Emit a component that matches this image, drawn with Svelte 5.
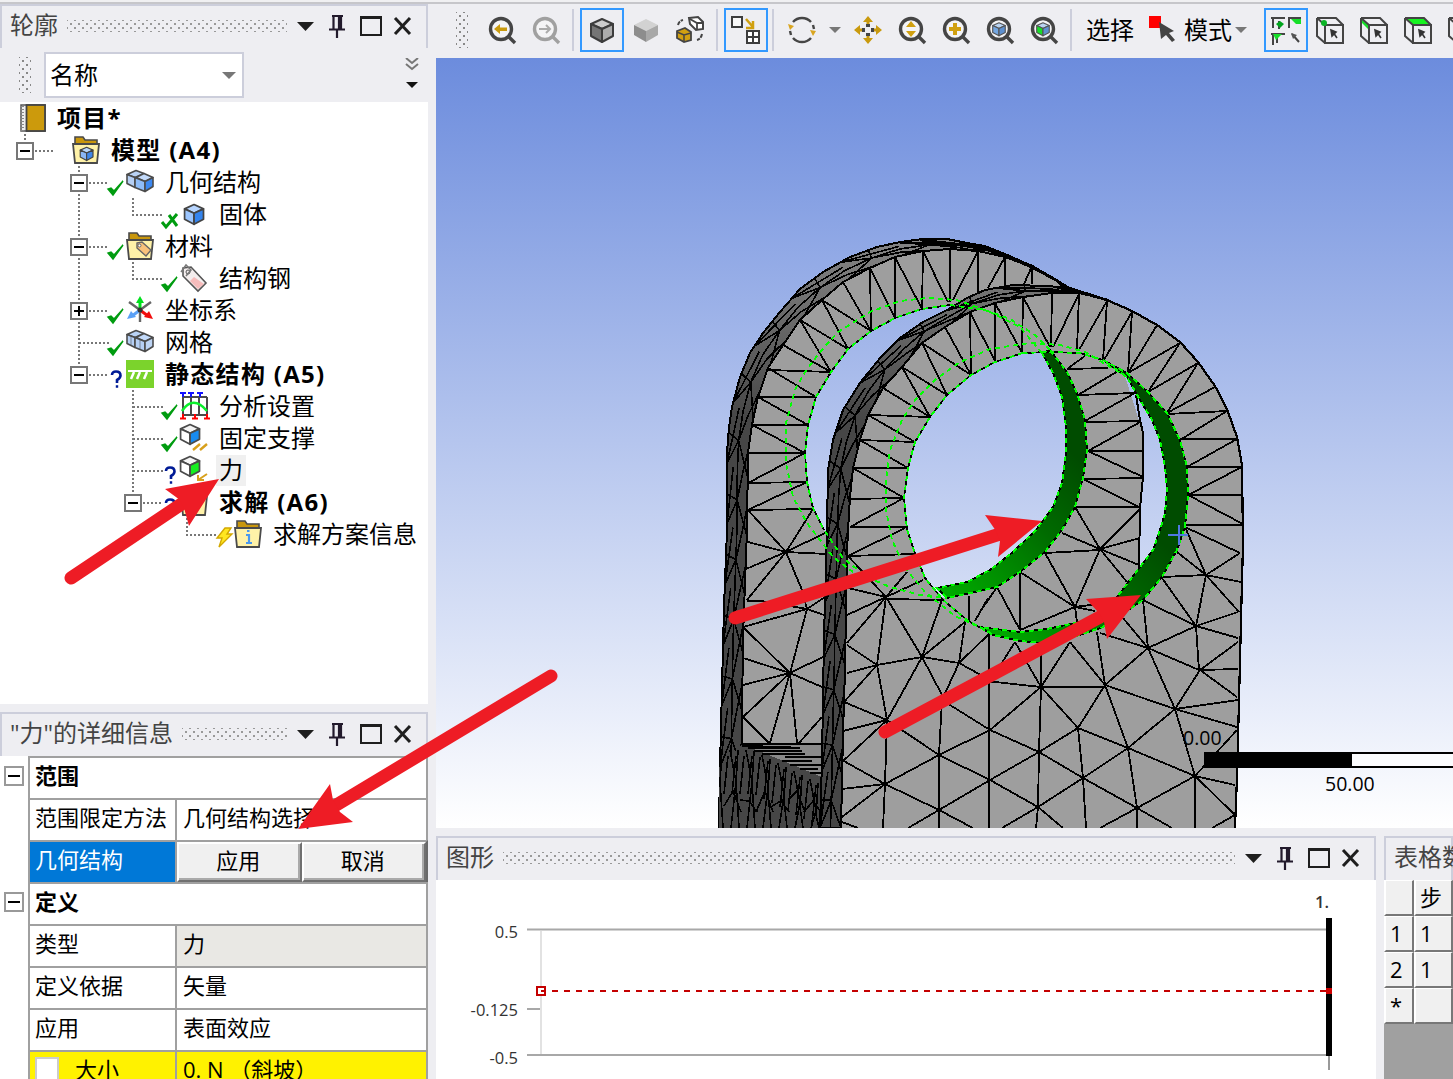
<script>
  const tree = [
    { level: 0, label: '项目*', icon: 'book', bold: true },
    { level: 1, label: '模型 (A4)', icon: 'model', bold: true },
    { level: 2, label: '几何结构', icon: 'cubes', status: 'check' },
    { level: 3, label: '固体', icon: 'cube', status: 'cross' },
    { level: 2, label: '材料', icon: 'material', status: 'check' },
    { level: 3, label: '结构钢', icon: 'tag', status: 'check' },
    { level: 2, label: '坐标系', icon: 'axes', status: 'check' },
    { level: 2, label: '网格', icon: 'mesh', status: 'check' },
    { level: 2, label: '静态结构 (A5)', icon: 'static', status: 'question', bold: true },
    { level: 3, label: '分析设置', icon: 'analysis', status: 'check' },
    { level: 3, label: '固定支撑', icon: 'support', status: 'check' },
    { level: 3, label: '力', icon: 'force', status: 'question', selected: true },
    { level: 3, label: '求解 (A6)', icon: 'solution', status: 'question', bold: true },
    { level: 4, label: '求解方案信息', icon: 'info', status: 'bolt' }
  ];
  const expanders = [[25, 49, '-'], [79, 81, '-'], [79, 145, '-'], [79, 209, '+'], [79, 273, '-'], [133, 401, '-']];

  // Polylines of the bracket, in viewport drawing units
  const rearOuter = [[719, 828], [720, 767], [722, 687], [724, 607], [727, 530], [727, 453], [729, 427], [732, 407], [740, 377], [750, 353], [763, 333], [780, 312], [800, 289], [823, 272], [850, 257], [877, 247], [900, 242], [923, 239], [947, 239], [967, 243], [985, 246], [1005, 254], [1032, 266], [1055, 279], [1069, 288]];
  const rearFace = [[741, 828], [742, 767], [742, 720], [743, 637], [747, 530], [748, 453], [752, 425], [758, 397], [768, 368], [783, 345], [800, 320], [822, 300], [843, 282], [870, 268], [895, 257], [923, 251], [950, 249], [978, 251], [1005, 257], [1032, 267], [1055, 280], [1069, 288]];
  const frontOuter = [[820, 828], [822, 760], [824, 637], [827, 530], [828, 470], [833, 440], [843, 410], [860, 383], [880, 358], [900, 338], [923, 322], [947, 310], [967, 298], [985, 290], [1013, 285], [1047, 286], [1069, 288], [1107, 300]];
  const frontFace = [[841, 828], [843, 733], [845, 670], [847, 553], [848, 530], [850, 497], [853, 468], [860, 440], [868, 415], [883, 388], [902, 367], [922, 343], [945, 327], [970, 312], [995, 303], [1023, 297], [1052, 293], [1080, 293], [1107, 300]];
  const frontRight = [[1107, 300], [1132, 311], [1157, 325], [1180, 342], [1198, 362], [1215, 386], [1227, 409], [1237, 437], [1242, 465], [1243, 543], [1241, 620], [1239, 700], [1237, 777], [1235, 828]];
  const frontHole = [[1023, 353], [995, 362], [971, 375], [947, 395], [930, 417], [915, 442], [908, 468], [904, 498], [907, 530], [915, 553], [925, 578], [943, 600], [967, 620], [993, 635], [1020, 641], [1043, 643], [1080, 635], [1103, 627], [1143, 600], [1162, 577], [1177, 550], [1185, 527], [1188, 495], [1187, 467], [1180, 440], [1167, 413], [1148, 392], [1127, 373], [1103, 360], [1080, 353], [1048, 352]];
  const rearHole = [[1050, 350], [1035, 335], [1010, 319], [985, 310], [950, 305], [922, 309], [895, 318], [871, 331], [848, 349], [831, 372], [816, 397], [808, 425], [805, 453], [807, 482], [813, 508], [824, 530], [843, 558], [867, 577], [890, 587], [920, 595], [947, 598], [980, 591], [997, 587], [1020, 572], [1045, 552], [1062, 530], [1075, 507], [1083, 478], [1087, 450], [1085, 420], [1077, 393], [1067, 372]];
  const rearHoleBack = [[1042, 353], [1020, 327], [990, 312], [957, 300], [927, 298], [900, 301], [870, 312], [838, 332], [820, 352], [805, 372], [795, 390], [786, 423], [786, 463], [793, 497], [807, 523], [833, 557], [853, 572]];
  const frontHoleBack = [[1127, 377], [1085, 352], [1060, 345], [1030, 343], [990, 349], [960, 362], [935, 380], [915, 400], [902, 420], [890, 450], [886, 480], [886, 510], [892, 540], [905, 568], [925, 592], [955, 616], [990, 632]];
  const bandOne = [[1042, 353], [1050, 350], [1067, 372], [1077, 393], [1085, 420], [1087, 450], [1083, 478], [1075, 507], [1062, 530], [1045, 552], [1020, 572], [997, 587], [980, 591], [947, 598], [937, 588], [967, 582], [990, 570], [1013, 552], [1036, 530], [1053, 507], [1062, 483], [1066, 453], [1066, 427], [1062, 397], [1053, 373]];
  const bandTwo = [[1103, 360], [1127, 373], [1148, 392], [1167, 413], [1180, 440], [1187, 467], [1188, 495], [1185, 527], [1177, 550], [1162, 577], [1143, 600], [1103, 627], [1080, 635], [1043, 643], [1020, 641], [993, 635], [980, 627], [1020, 632], [1047, 629], [1080, 622], [1097, 613], [1117, 597], [1140, 567], [1153, 550], [1160, 530], [1165, 513], [1167, 490], [1165, 467], [1160, 440], [1152, 420], [1140, 400], [1127, 377]];
  const gap = [[1136, 395], [1140, 400], [1152, 420], [1160, 440], [1165, 467], [1167, 490], [1165, 513], [1160, 530], [1153, 550], [1139, 567], [1140, 508], [1143, 477], [1143, 433], [1140, 420]];

  // Element edges as "x1,y1,x2,y2"; the rear plate, then the front plate
  const rearEdges = `748,510,807,482 748,510,813,509 748,483,805,453 748,483,807,482 748,453,805,453 752,425,805,453 752,425,808,425 758,397,808,425 758,397,816,397 768,368,816,397 768,370,831,372 783,345,831,372 800,320,831,372 800,320,848,349 822,300,848,349 822,300,871,331 843,282,871,331 870,268,871,331 870,268,895,318 895,257,895,318 895,257,922,309 923,251,922,309 923,251,948,302 950,249,950,302 978,251,953,300 978,251,978,292 1005,257,988,288 1005,257,1005,286 1032,266,1024,284 1032,266,1032,284 1055,279,1062,286
    748,510,786,552 748,542,786,552 746,569,786,552 747,600,786,552 802,590,786,552 827,554,786,552 813,509,786,552 825,533,786,552 747,601,762,601 802,590,807,609 743,627,807,609 762,601,807,609 825,597,807,609 824,615,807,609 790,673,807,609 743,627,790,673 743,658,790,673 743,685,790,673 743,717,790,673 825,656,790,673 822,687,790,673 770,743,790,673 797,743,790,673 743,717,769,743 822,717,799,743
    1067,369,1108,368 1067,369,1085,356 1078,395,1118,371 1078,395,1135,393 1085,421,1135,393 1085,422,1142,421 1088,451,1142,421 1088,451,1143,451 1088,451,1143,477 1083,479,1143,478 1083,479,1141,508 1075,507,1141,507 1075,507,1100,549 1141,508,1100,549 1140,538,1100,549 1139,565,1100,549 1127,582,1100,549 1062,533,1100,549 1045,553,1100,550 1075,607,1100,549 1045,553,1075,607 1020,572,1075,607 1020,630,1075,607 1098,604,1075,607 1095,611,1075,607 1077,622,1075,607 1020,573,1020,630 997,587,1020,630 997,587,980,612 969,596,969,620 988,598,975,621`;
  const frontEdges = `850,527,904,498 850,527,907,527 850,499,904,498 853,468,904,498 853,468,908,468 860,440,908,468 860,440,915,442 868,415,915,442 868,415,930,417 883,388,930,417 902,367,930,417 902,367,947,395 922,343,947,395 922,343,971,375 945,327,971,375 970,312,971,375 970,312,995,361 995,303,995,361 995,303,1022,353 1023,297,1022,353 1023,297,1050,347 1052,293,1051,347 1079,294,1053,347 1079,294,1077,350 1107,301,1079,350 1107,301,1103,360 1132,312,1104,360 1132,312,1128,373 1157,325,1128,373 1180,343,1128,373 1180,343,1148,392 1198,363,1148,392 1198,363,1167,413 1215,387,1167,413 1227,411,1167,414 1227,411,1180,440 1237,439,1180,439 1237,439,1187,467 1242,467,1187,467 1242,467,1188,495 1243,495,1188,495 1243,524,1188,495 1243,525,1185,525
    1185,527,1206,575 1177,552,1206,575 1162,577,1206,575 1240,553,1206,575 1241,582,1206,575 1196,626,1206,575 1239,612,1206,575 1185,527,1240,553 1162,578,1196,626 1143,600,1196,626 1238,612,1196,626 1238,638,1196,626 1199,670,1196,626 1148,648,1196,626 1143,600,1148,648 1123,618,1148,648 1100,633,1148,648 1105,685,1148,648 1175,709,1148,648 1199,670,1148,648 1238,642,1200,670 1238,669,1200,670 1237,697,1200,670 1175,709,1200,670 1238,700,1175,709 1237,727,1175,709 1128,748,1175,709 1195,776,1175,709 1105,685,1175,709 1097,632,1105,685 1070,642,1105,685 1041,687,1105,687 1078,728,1105,685 1128,748,1105,685 1070,642,1041,687 1041,644,1041,687 1015,642,1041,687 995,682,1041,687 990,730,1041,687 1078,728,1041,687 1039,752,1041,687 1039,752,1078,728 1083,778,1078,728 1128,748,1078,728 1083,778,1128,748 1137,808,1128,748 1195,776,1128,748 1237,730,1195,776 1235,785,1195,776 1235,815,1195,776 1137,808,1195,776 1195,828,1195,776 990,730,1039,752 1083,778,1039,752 990,780,1039,752 1038,807,1039,752 1038,807,1083,778 1086,828,1083,778 1137,808,1083,778 990,780,1038,807 1002,828,1038,807 1036,828,1038,807 1063,828,1038,807 1100,828,1137,808 1137,828,1137,808 1172,828,1137,808 1235,815,1212,828 989,633,989,828 990,682,1015,642 990,682,995,682
    848,588,886,597 907,572,886,597 942,600,886,599 847,615,886,597 847,643,886,597 877,665,886,597 922,657,886,597 923,580,886,597 848,556,886,597 848,556,915,554 848,556,905,528 847,645,877,665 847,673,877,665 922,657,877,665 887,720,877,665 844,702,877,665 942,600,922,657 965,622,922,657 959,663,922,657 887,720,922,657 942,695,922,657 965,622,959,663 990,633,959,663 942,700,959,663 990,680,959,663 990,730,942,700 939,755,942,700 844,702,887,720 843,731,887,720 842,762,887,720 885,784,887,720 939,755,887,720 990,730,939,755 885,784,939,755 990,780,939,755 939,810,939,755 842,760,885,784 842,789,885,784 842,817,885,784 883,828,885,784 939,810,885,784 990,780,939,810 908,828,939,810 939,828,939,810 973,828,939,810 842,822,858,828`;

  const path = (pts) => 'M' + pts.map((p) => p.join(' ')).join('L');
  const closed = (pts) => path(pts) + 'Z';
  const edges = (text) =>
    text.trim().split(/\s+/).map((e) => {
      const [a, b, c, d] = e.split(',');
      return `M${a} ${b}L${c} ${d}`;
    }).join('');

  function resample(points, count) {
    const lengths = [0];
    for (let i = 1; i < points.length; i++) {
      lengths.push(lengths[i - 1] + Math.hypot(points[i][0] - points[i - 1][0], points[i][1] - points[i - 1][1]));
    }
    const out = [];
    for (let i = 0; i <= count; i++) {
      const t = (lengths[lengths.length - 1] * i) / count;
      let k = 1;
      while (k < lengths.length - 1 && lengths[k] < t) k++;
      const f = (t - lengths[k - 1]) / (lengths[k] - lengths[k - 1]);
      out.push([0, 1].map((d) => +(points[k - 1][d] + f * (points[k][d] - points[k - 1][d])).toFixed(1)));
    }
    return out;
  }

  // Foreshortened side faces: rails joined by long crossing edges
  function sideMesh(outer, inner, count) {
    const a = resample(outer, count);
    const c = resample(inner, count);
    const mix = (t) => a.map((p, i) => [p[0] + (c[i][0] - p[0]) * t, p[1] + (c[i][1] - p[1]) * t]);
    const b = mix(0.5);
    const q = mix(0.75);
    let d = path(b);
    for (let i = 0; i < count; i++) {
      if (i % 2) d += path([a[i], b[i], c[Math.max(i - 1, 0)]]) + path([b[i], q[i + 1], c[Math.min(i + 2, count)]]);
      else d += path([a[i], b[i + 1], c[i]]) + path([a[i], mix(0.3)[Math.min(i + 2, count)]]);
    }
    return d;
  }

  function baseMesh() {
    let d = '';
    for (let i = 0; i < 13; i++) {
      const x = 722 + i * 8;
      const top = Math.max(750, 735 + i * 4);
      d += `M${x} ${top}L${x + (i % 2 ? 6 : -2)} ${top + 32}L${x + 1} 828M${x + 6} ${top + 6}L${x + 2} ${top + 44}`;
      if (i % 2) d += `M${x - 6} ${800 + (i % 3) * 6}L${x + 3} ${786 + (i % 4) * 5}L${x + 11} 812`;
    }
    return d;
  }

  const rearSide = [...rearOuter, ...[...rearFace].reverse()];
  const frontSide = [...frontOuter, ...[...frontFace].reverse()];
  const rearBody = [...rearOuter, [1107, 320], [1143, 433], [1143, 640], [850, 828]];
  const frontBody = [...frontFace, ...frontRight];

  const rows = [
    ['1', '1'],
    ['2', '1'],
    ['*', '']
  ];
</script>

{#snippet lens(color)}
  <path d="M20 20L27 27" stroke={color} stroke-width="3.4" />
  <circle cx="13" cy="13" r="10.5" fill="#f4f4f6" stroke={color} stroke-width="3.4" />
{/snippet}

{#snippet cubeShape(top, left, right, line)}
  <path d="M14 3L25 8L14 13L3 8Z" fill={top} stroke={line} stroke-width="2" stroke-linejoin="round" />
  <path d="M3 8L14 13V26L3 20Z" fill={left} stroke={line} stroke-width="2" stroke-linejoin="round" />
  <path d="M25 8L14 13V26L25 20Z" fill={right} stroke={line} stroke-width="2" stroke-linejoin="round" />
{/snippet}

{#snippet folder()}
  <path d="M3 8V1H11L13 4H25V9Z" fill="#c8960c" stroke="#4a4a4a" stroke-width="1.6" />
  <path d="M1 8H27L25 27H3Z" fill="#fff2a8" stroke="#4a4a4a" stroke-width="1.8" />
{/snippet}

{#snippet icon(name)}
  <svg class="icon" viewBox="0 0 28 28" fill="none">
    {#if name === 'book'}
      <rect x="3" y="1" width="24" height="26" fill="#eee" stroke="#555" stroke-width="1.5" />
      <rect x="8.500" y="1" width="18.500" height="26" fill="#cc9a0c" stroke="#444" stroke-width="1.800" />
      <path d="M4 2V27" stroke="#888" stroke-width="4" stroke-dasharray="1 2" />
    {:else if name === 'model'}
      {@render folder()}
      <g transform="translate(6.500 9.500) scale(.58)">{@render cubeShape('#b9d6fb', '#8ab6f5', '#3f86e8', '#444')}</g>
    {:else if name === 'cubes' || name === 'mesh'}
      {@const mesh = name === 'mesh'}
      <g stroke="#4b4b4b" stroke-width="1.600" stroke-linejoin="round" transform="translate(0 .5)">
        <path d="M1 6L10 2L18 5L9 9Z" fill="#bad3f5" /><path d="M1 6L9 9V19L1 15Z" fill="#b5cff4" />
        <path d="M10 9L18 5L27 9L19 13Z" fill="#c3dafa" />
        <path d="M9 9L19 13V23L9 19Z" fill={mesh ? '#b5cff4' : '#8ebcf8'} />
        <path d="M27 9L19 13V23L27 18Z" fill={mesh ? '#bdd4f4' : '#3c88f0'} />
        {#if mesh}<path d="M5 7.500V17M14 11V21" opacity=".35" />{/if}
      </g>
    {:else if name === 'cube'}
      <g transform="translate(2 2) scale(.86)">{@render cubeShape('#b7d5ff', '#9cc6ff', '#3484ee', '#444')}</g>
    {:else if name === 'material'}
      {@render folder()}
      <path d="M11 11L16 10L25 18L20 24L11 16Z" fill="#f9c27b" stroke="#666" stroke-width="1.400" />
      <circle cx="13.500" cy="13.500" r="1.500" fill="#fff" stroke="#666" />
    {:else if name === 'tag'}
      <path d="M3 4L11 3L26 19L18 27L3 12Z" fill="#f4eeee" stroke="#555" stroke-width="1.600" />
      <path d="M14 13L24 20L18 25L10 17Z" fill="#f6bcbc" />
      <circle cx="8" cy="8" r="2" stroke="#555" /><path d="M1 8L6 1L11 6L6 12" stroke="#777" stroke-width="1.500" />
    {:else if name === 'axes'}
      <path d="M14 14L3 6M14 14L25 6M14 14V26" stroke="#666" stroke-width="2.400" />
      <path d="M14 14V5" stroke="#00e01c" stroke-width="3" /><path d="M10 7L14 0L18 7Z" fill="#00e01c" />
      <path d="M14 14L6 20" stroke="#5aa0f6" stroke-width="3" /><path d="M1 23L5 15L10 21Z" fill="#5aa0f6" />
      <path d="M14 14L22 20" stroke="#f20d0d" stroke-width="3" /><path d="M27 23L18 21L23 15Z" fill="#f20d0d" />
      <circle cx="14" cy="14" r="2.500" fill="#333" />
    {:else if name === 'static'}
      <rect width="28" height="28" fill="#7bd32c" />
      <path d="M2 11H26" stroke="#fff" stroke-width="2" /><path d="M8 12L5 19M14 12L11 19M21 12L18 19" stroke="#fff" stroke-width="2.500" />
    {:else if name === 'analysis'}
      <path d="M3 5V23M27 5V23M11 4V23M19 4V23M3 5H27M3 23H27" stroke="#4a4a4a" stroke-width="2" />
      <path d="M0 1H6M8 1H14M17 1H23M3 1V5M11 1V5M20 1V5" stroke="#1010ff" stroke-width="2" />
      <path d="M0 26.500H6M12 26.500H18M24 26.500H30M3 22V27M15 22V27M27 22V27" stroke="#f00" stroke-width="2" />
      <path d="M2 19C9 8 18 8 27 19" stroke="#0bf02c" stroke-width="2.500" />
    {:else if name === 'support' || name === 'force'}
      <g transform="translate(-2 -2) scale(.86)">{@render cubeShape('#f4f4f4', '#fff', name === 'support' ? '#188bf0' : '#16ef20', '#4a4a4a')}</g>
      {#if name === 'support'}
        <path d="M13 26L20 20M20 26L27 20" stroke="#d8a01c" stroke-width="2.400" />
      {:else}<path d="M27 18L18 24M18 19V24H24" stroke="#d8a01c" stroke-width="2" />{/if}
    {:else if name === 'solution' || name === 'info'}
      {@render folder()}
      {#if name === 'info'}<path d="M12 15H15V23M12 23H18M13 11H15.500" stroke="#4a98ee" stroke-width="2.200" />{/if}
    {:else if name === 'zoom-back'}
      {@render lens('#454545')}
      <path d="M6 13L12 8V11.500H19V15H12V18Z" fill="#c99a0e" />
    {:else if name === 'zoom-forward'}
      {@render lens('#a0a0a0')}
      <path d="M7 13H18M14 9L18 13L14 17" stroke="#aaa" stroke-width="2" />
    {:else if name === 'zoom-drag'}
      {@render lens('#454545')}
      <path d="M8 11L13 5L18 11ZM8 15L13 21L18 15Z" fill="#d0a010" />
    {:else if name === 'zoom-in'}
      {@render lens('#454545')}
      <path d="M7 13H19M13 7V19" stroke="#d0a010" stroke-width="4" />
    {:else if name === 'zoom-fit' || name === 'zoom-pick'}
      {@render lens('#454545')}
      <g transform="translate(5 5) scale(.57)">{@render cubeShape('#b9d3f2', name === 'zoom-fit' ? '#73a6e0' : '#16df28', '#5d90d0', '#555')}</g>
    {:else if name === 'shaded-edges'}
      {@render cubeShape('#ccc', '#757575', '#adadad', '#3d3d3d')}
    {:else if name === 'shaded'}
      <path d="M14 3L26 9L14 15L2 9Z" fill="#d2d2d2" /><path d="M2 9L14 15V26L2 19Z" fill="#8d8d8d" /><path d="M26 9L14 15V26L26 19Z" fill="#a8a8a8" />
    {:else if name === 'swap'}
      <path d="M13 2L22 1L27 6V13L20 14L14 8Z" fill="#fff" stroke="#444" stroke-width="2" /><path d="M14 3L21 7H27M21 7V13" stroke="#444" stroke-width="1.800" />
      <path d="M1 15L9 12L15 16V24L8 26L1 22Z" fill="#d1a011" stroke="#444" stroke-width="1.800" /><path d="M1 16L8 19L15 17M8 19V26" stroke="#444" stroke-width="1.500" />
      <path d="M2 9Q3 5 7 4M26 18Q25 23 21 24" stroke="#444" stroke-width="2" stroke-dasharray="4 1" />
    {:else if name === 'convert'}
      <rect x="0" y="1" width="10" height="10" fill="#f8f8f8" stroke="#3d3d3d" stroke-width="2" />
      <path d="M14 3L21 11M21 5V12H14" stroke="#d0a010" stroke-width="2.500" />
      <rect x="15" y="15" width="12" height="12" fill="#fff" stroke="#3d3d3d" stroke-width="2" /><path d="M21 15V27M15 21H27" stroke="#3d3d3d" stroke-width="2" />
    {:else if name === 'rotate'}
      <path d="M5 6A12 12 0 0 1 23 6M25 9L26 13M23 22A12 12 0 0 1 5 22M3 19L2 15" stroke="#454545" stroke-width="2.400" />
      <path d="M0 8L6 10L2 14ZM22 14L28 15L25 20Z" fill="#d9a520" />
    {:else if name === 'pan'}
      <path d="M14 0L19 6H9ZM14 28L19 22H9ZM0 14L6 9V19ZM28 14L22 9V19Z" fill="#c99a0e" />
      <path d="M14 5V8M14 20V23M5 14H8M20 14H23" stroke="#c99a0e" stroke-width="3" />
      <path d="M12 9.500H16M12 18.500H16M9.500 12V16M18.500 12V16" stroke="#454545" stroke-width="3" />
    {:else if name === 'select-mode'}
      <rect x="0" y="0" width="12" height="12" fill="#f00" />
      <path d="M10 6L25 15L20 17L26 24L23 26L17 19L12 23Z" fill="#444" />
    {:else if name === 'filter-all'}
      <path d="M-1 2H13M1 2V12M7 5V13M16 2H29M17 2V12M-1 18H13M1 18V29M5 21V27M20 18L27 26" stroke="#444" stroke-width="2" />
      <path d="M4 8L8 5L12 8L8 12Z" fill="#00a51d" /><path d="M19 3H29V8H24Z" fill="#16df28" /><path d="M1 18L10 18L4 24Z" fill="#16df28" /><path d="M19 17L25 19L21 23Z" fill="#555" />
    {:else if name.startsWith('filter-')}
      {#if name === 'filter-edge'}<path d="M1 2L10 10L9 14L0 5Z" fill="#16df28" />{/if}
      {#if name === 'filter-face'}<path d="M2 2H20L27 9H9Z" fill="#16f420" />{/if}
      <path d="M1 2H20L27 9M1 2V20L9 27M1 2L9 9M9 9H27V27H9Z" stroke="#444" stroke-width="2" />
      {#if name === 'filter-vertex'}<circle cx="8" cy="7" r="3" fill="#0bb526" />{/if}
      <path d="M15 14L20 16L16 20ZM17 16L21 22" fill="#333" stroke="#333" stroke-width="1.600" />
    {/if}
  </svg>
{/snippet}

{#snippet tool(name, active)}
  <button class="tool" class:active>{@render icon(name)}</button>
{/snippet}

{#snippet panelHead(title)}
  <header class="head">
    <span class="title">{title}</span>
    <span class="dots"></span>
    <svg class="controls" viewBox="0 0 120 30" fill="none">
      <path d="M2 11H19L10.500 20Z" fill="#1e1e1e" />
      <path d="M37 5H48M38.500 5V18M44 5V18M46 5V18M34 18.500H50M42 18V27" stroke="#221a2c" stroke-width="2.200" />
      <rect x="66" y="6" width="20" height="18" stroke="#1e1e1e" stroke-width="2" /><path d="M65 6.500H87" stroke="#1e1e1e" stroke-width="3" />
      <path d="M100 7L115 23M115 7L100 23" stroke="#1e1e1e" stroke-width="3" />
    </svg>
  </header>
{/snippet}

{#snippet toggle()}
  <svg class="toggle" viewBox="0 0 20 20"><rect x="1" y="1" width="18" height="18" fill="#fff" stroke="#999" stroke-width="2" /><path d="M4 10H16" stroke="#000" stroke-width="2" /></svg>
{/snippet}

<div class="app">
  <aside class="left">
    <section class="outline">
      {@render panelHead('轮廓')}
      <div class="filter">
        <span class="grip"></span>
        <div class="combo"><span>名称</span><i class="caret"></i></div>
        <svg class="more" viewBox="0 0 14 34" fill="none"><path d="M1 0L7 5L13 0M1 6L7 11L13 6" stroke="#777" stroke-width="2" /><path d="M1 24H13L7 30Z" fill="#111" /></svg>
      </div>
      <div class="tree">
        <svg class="branches" viewBox="0 0 428 602" fill="none">
          <path d="M25 32V40M35 49H55M79 64V273M89 81H109M89 145H109M89 209H109M79 241H109M89 273H109M133 96V113H163M133 160V177H163M133 288V401M133 305H163M133 337H163M133 369H163M143 401H163M187 416V433H217" stroke="#777" stroke-width="2" stroke-dasharray="2 2" />
          {#each expanders as [x, y, sign]}
            <rect x={x - 8} y={y - 8} width="16" height="16" fill="#fff" stroke="#777" stroke-width="2" />
            <path d={`M${x - 5} ${y}H${x + 5}` + (sign === '+' ? `M${x} ${y - 5}V${y + 5}` : '')} stroke="#000" stroke-width="2" />
          {/each}
        </svg>
        {#each tree as item}
          <div class="node" class:bold={item.bold} style:padding-left={`${item.level * 54}px`}>
            <svg class="status" viewBox="0 0 18 32" fill="none">
              {#if item.status === 'check'}
                <path d="M0 23L5 29L15 15L6 25L3 22Z" fill="#009c10" stroke="#009c10" stroke-width="1.500" />
              {:else if item.status === 'cross'}
                <path d="M0 24L4 29L15 16M7 17L15 28" stroke="#009c10" stroke-width="3" />
              {:else if item.status === 'question'}
                <path d="M4 17Q4 13.500 8 13.500Q12.500 13.500 12.500 17.500Q12.500 20 9 22V25M7.800 28.500H10.200" stroke="#001b96" stroke-width="2.600" />
              {:else if item.status === 'bolt'}
                <path d="M9 10H15L11 16H16L3 29L6 20H1Z" fill="#ffe620" stroke="#d3a800" stroke-width="1.400" />
              {/if}
            </svg>
            {@render icon(item.icon)}
            <span class="label" class:selected={item.selected}>{item.label}</span>
          </div>
        {/each}
      </div>
    </section>

    <section class="details">
      {@render panelHead('"力"的详细信息')}
      <div class="props">
        <div class="gutter">{@render toggle()}</div><div class="group">范围</div>
        <div class="gutter"></div><div class="name">范围限定方法</div><div class="value">几何结构选择</div>
        <div class="gutter"></div><div class="name current">几何结构</div><div class="value pair"><button>应用</button><button>取消</button></div>
        <div class="gutter">{@render toggle()}</div><div class="group">定义</div>
        <div class="gutter"></div><div class="name">类型</div><div class="value locked">力</div>
        <div class="gutter"></div><div class="name">定义依据</div><div class="value">矢量</div>
        <div class="gutter"></div><div class="name">应用</div><div class="value">表面效应</div>
        <div class="gutter"></div><div class="name missing"><i class="box"></i>大小</div><div class="value missing">0. N （斜坡）</div>
      </div>
    </section>
  </aside>

  <main class="right">
    <nav class="toolbar">
      <span class="grip"></span>
      {@render tool('zoom-back')}{@render tool('zoom-forward')}
      <i class="sep"></i>
      {@render tool('shaded-edges', true)}{@render tool('shaded')}{@render tool('swap')}
      <i class="sep"></i>
      {@render tool('convert', true)}
      <i class="sep"></i>
      {@render tool('rotate')}<span class="drop"><i class="caret"></i></span>
      {@render tool('pan')}{@render tool('zoom-drag')}{@render tool('zoom-in')}{@render tool('zoom-fit')}{@render tool('zoom-pick')}
      <i class="sep"></i>
      <span class="text">选择</span>
      <span class="mode">{@render icon('select-mode')}模式<i class="caret"></i></span>
      {@render tool('filter-all', true)}{@render tool('filter-vertex')}{@render tool('filter-edge')}{@render tool('filter-face')}{@render tool('filter-body')}
    </nav>

    <svg class="viewport" viewBox="436 58 1017 770" fill="none">
      <defs>
        <linearGradient id="sky" gradientUnits="userSpaceOnUse" x1="0" y1="58" x2="0" y2="828">
          <stop offset="0" stop-color="#6c8cdd" /><stop offset="1" stop-color="#ffffff" />
        </linearGradient>
        <linearGradient id="leaf" gradientUnits="userSpaceOnUse" x1="1120" y1="500" x2="990" y2="630">
          <stop offset="0" stop-color="#004c00" /><stop offset=".4" stop-color="#006a00" /><stop offset="1" stop-color="#00a800" />
        </linearGradient>
        <linearGradient id="side" gradientUnits="userSpaceOnUse" x1="0" y1="240" x2="0" y2="420">
          <stop offset="0" stop-color="#858585" /><stop offset="1" stop-color="#464646" />
        </linearGradient>
        <mask id="rearOpening"><rect x="436" y="58" width="1017" height="770" fill="#fff" /><path d={closed(rearHole)} fill="#000" /></mask>
        <mask id="frontOpening"><rect x="436" y="58" width="1017" height="770" fill="#fff" /><path d={closed(frontHole)} fill="#000" /></mask>
      </defs>
      <rect x="436" y="58" width="1017" height="770" fill="url(#sky)" />

      <g shape-rendering="crispEdges">
        <g mask="url(#rearOpening)">
          <path d={closed(rearBody)} fill="#9e9e9e" />
          <path d={edges(rearEdges)} stroke="#000" stroke-width="1.800" />
        </g>
        <path d={closed(rearSide)} fill="url(#side)" stroke="#000" stroke-width="2" />
        <path d={sideMesh(rearOuter, rearFace, 28)} stroke="#000" stroke-width="1.600" />
        <path d="M719 828V767L742 744L822 776V828Z" fill="#464646" />
        <path d="M742 744H822V777Z" fill="#8a8a8a" />
        <path d="M742 744H822M742 746L800 748M748 748H800M754 751H802M762 754H805M785 757H822M782 761H812M790 765H822M800 769H818M810 773H822" stroke="#000" stroke-width="2.400" />
        <path d={baseMesh()} stroke="#000" stroke-width="1.600" />
        <path d={closed(gap)} fill="url(#sky)" />
        <path d="M1136 395L1140 420L1143 433V477L1140 508L1139 567" stroke="#000" stroke-width="2" />
        <path d={closed(bandOne)} fill="url(#leaf)" />

        <g mask="url(#frontOpening)">
          <path d={closed(frontBody)} fill="#9e9e9e" />
          <path d={edges(frontEdges)} stroke="#000" stroke-width="1.800" />
        </g>
        <path d={closed(frontSide)} fill="url(#side)" stroke="#000" stroke-width="2" />
        <path d={sideMesh(frontOuter, frontFace, 26)} stroke="#000" stroke-width="1.600" />
        <path d={path(frontRight)} stroke="#000" stroke-width="2.200" />
        <path d="M920 240L985 247L1032 266L1069 288L1107 300" stroke="#000" stroke-width="2.600" />
        <path d={closed(bandTwo)} fill="url(#leaf)" />

        <g stroke="#000" stroke-width="1.800">
          <path d={closed(frontHole)} />
          <path d={path(rearHole.slice(4, 16))} />
          <path d={closed(bandOne)} /><path d={closed(bandTwo)} />
        </g>
        <g stroke="#0f0" stroke-width="1.900" stroke-dasharray="5 4">
          <path d={closed(frontHole)} /><path d={path(rearHole.slice(0, 21))} />
          <path d={path(rearHoleBack)} /><path d={path(frontHoleBack)} />
          <path d={closed(bandOne)} /><path d={closed(bandTwo)} />
        </g>
        <path d="M1168 535H1188M1179 525V545" stroke="#5078e0" stroke-width="2" />
        <rect x="1205" y="753" width="260" height="14" fill="#fff" fill-opacity=".7" stroke="#000" stroke-width="2" />
        <rect x="1204" y="752" width="148" height="16" fill="#000" />
      </g>
      <g class="scale"><text x="1183" y="745">0.00</text><text x="1325" y="791">50.00</text></g>
    </svg>

    <div class="bottom">
      <section class="graph">
        {@render panelHead('图形')}
        <svg class="plot" viewBox="436 880 940 199" fill="none">
          <path d="M527 929.500H1329M527 1009H540M527 1055H1329" stroke="#a8a8a8" stroke-width="2" />
          <path d="M541 931V1054" stroke="#e2e2e2" stroke-width="2" />
          <path d="M1329 1056V1070" stroke="#999" stroke-width="2" />
          <rect x="1326" y="918" width="6" height="138" fill="#000" />
          <path d="M552 991H1329" stroke="#c40000" stroke-width="2" stroke-dasharray="6 6" />
          <rect x="537" y="987" width="8" height="8" fill="#fff" stroke="#c40000" stroke-width="2" /><path d="M541 991H545" stroke="#c40000" stroke-width="2" />
          <rect x="1326" y="988" width="6" height="6" fill="#d00000" />
          <g class="ticks"><text x="518" y="938">0.5</text><text x="518" y="1016">-0.125</text><text x="518" y="1064">-0.5</text><text class="end" x="1329" y="908">1.</text></g>
        </svg>
      </section>
      <section class="table">
        <header class="head"><span class="title">表格数据</span></header>
        <div class="cells">
          <div class="cell"></div><div class="cell">步</div>
          {#each rows as row}
            {#each row as value}<div class="cell">{value}</div>{/each}
          {/each}
        </div>
      </section>
    </div>
  </main>

  <svg class="annotations" viewBox="0 0 1453 1079">
    <g stroke="#ee1c25" stroke-width="13" stroke-linecap="round"><path d="M71 578L186 501M551 676L333 807M735 618L1000 534M885 732L1100 617" /></g>
    <path d="M219 479L165 489L180 500L184 508L189 526ZM298 829L330 784L333 800L340 812L353 822ZM1042 521L985 515L996 531L1000 541L998 557ZM1141 595L1086 599L1099 613L1104 622L1107 639Z" fill="#ee1c25" />
  </svg>
</div>

<style>
  :global(body) { margin: 0; overflow: hidden; }
  .app {
    position: relative;
    box-sizing: border-box;
    width: 1453px;
    height: 1079px;
    border-top: 2px solid #f0f0f2;
    display: grid;
    grid-template-columns: 428px 1017px;
    column-gap: 8px;
    overflow: hidden;
    background: #eeeef2;
    font: 22px/1 'Open Sans', 'Noto Sans CJK SC', sans-serif;
    color: #000;
  }
  .app::before { content: ''; position: absolute; inset: 0 0 auto; height: 2px; background: #c6c6ca; }
  .left, .right { display: flex; flex-direction: column; min-width: 0; height: 1077px; }
  button { font: inherit; color: inherit; padding: 0; }
  .head {
    box-sizing: border-box;
    height: 44px;
    flex: none;
    display: flex;
    align-items: center;
    padding: 0 9px 3px 8px;
    border: 2px solid #cccedb;
    border-bottom: 0;
    background: #eeeef2;
  }
  .title { font-size: 24px; color: #444; white-space: nowrap; padding-bottom: 2px; }
  .dots {
    flex: 1;
    height: 12px;
    margin: 0 8px 0 9px;
    background: radial-gradient(circle, #999 1px, transparent 1.3px) 0 0 / 8px 8px, radial-gradient(circle, #999 1px, transparent 1.3px) 4px 4px / 8px 8px;
  }
  .controls { width: 120px; height: 30px; flex: none; margin-right: 2px; }
  .caret { display: inline-block; border: 7px solid transparent; border-top: 7px solid #777; border-bottom: 0; }
  .grip {
    width: 12px;
    height: 36px;
    flex: none;
    background: radial-gradient(circle, #888 1px, transparent 1.3px) 0 0 / 8px 8px, radial-gradient(circle, #888 1px, transparent 1.3px) 4px 4px / 8px 8px;
  }
  .outline { height: 702px; flex: none; display: flex; flex-direction: column; padding-top: 2px; box-sizing: border-box; }
  .filter { height: 54px; display: flex; align-items: center; padding: 0 9px 0 19px; box-sizing: border-box; }
  .combo {
    box-sizing: border-box;
    width: 200px;
    height: 46px;
    margin: 0 auto 0 13px;
    padding: 0 6px 0 4px;
    display: flex;
    align-items: center;
    justify-content: space-between;
    font-size: 24px;
    background: #fff;
    border: 2px solid #cccedb;
  }
  .more { width: 14px; height: 34px; }
  .tree { position: relative; flex: 1; background: #fff; }
  .branches { position: absolute; left: 0; top: 0; width: 428px; height: 602px; }
  .node { position: relative; display: flex; align-items: center; height: 32px; font-size: 24px; }
  .status { width: 18px; height: 32px; flex: none; overflow: visible; }
  .icon { width: 28px; height: 28px; flex: none; overflow: visible; }
  .label { margin-left: 8px; padding: 0 3px 1px; line-height: 30px; white-space: nowrap; }
  .selected { background: #f0f0f0; }
  .bold { font-weight: 700; }
  .bold .label { letter-spacing: 1.3px; }

  .details { margin-top: 8px; flex: 1; min-height: 0; display: flex; flex-direction: column; }
  .props {
    display: grid;
    grid-template-columns: 28px 149px 251px;
    grid-auto-rows: 42px;
    background: #fff;
  }
  .props > div { box-sizing: border-box; display: flex; align-items: center; white-space: nowrap; padding-bottom: 6px; }
  .props > .gutter { padding: 0 0 2px 4px; }
  .toggle { width: 20px; height: 20px; }
  .group { grid-column: 2 / 4; font-weight: 700; }
  .group, .name, .value { border-top: 2px solid #a0a0a0; border-right: 2px solid #a0a0a0; padding-left: 6px; }
  .group, .name { border-left: 2px solid #a0a0a0; padding-left: 5px; }
  .current { background: #0078d7; color: #fff; }
  .locked { background: #e9e8e4; }
  .missing { background: #fff200; }
  .box { width: 20px; height: 20px; margin-right: 16px; background: #fff; border: 2px solid #ccc; }
  .props > .pair { padding: 0; border-right-color: #696969; }
  .pair button {
    box-sizing: border-box;
    flex: 1;
    height: 40px;
    padding: 0 2px 4px 0;
    background: #f0f0f0;
    border: 2px solid #fff;
    border-right-color: #707070;
    border-bottom-color: #707070;
    box-shadow: inset -2px -2px #aaa;
  }

  .toolbar {
    height: 56px;
    flex: none;
    display: flex;
    align-items: center;
    padding-left: 20px;
    box-sizing: border-box;
    overflow: hidden;
    font-size: 24px;
  }
  .toolbar .grip { margin-right: 12px; }
  .tool {
    box-sizing: border-box;
    width: 44px;
    height: 44px;
    flex: none;
    display: grid;
    place-items: center;
    border: 0;
    background: none;
  }
  .active { border: 2px solid #3399ff; }
  .sep { width: 2px; height: 42px; margin: 0 6px 0 4px; flex: none; background: #cccedb; }
  .drop { width: 22px; flex: none; display: grid; place-items: center; }
  .drop .caret { border-width: 6px 6px 0; }
  .text { margin: 0 15px 0 8px; }
  .mode { display: flex; align-items: center; margin-right: 17px; }
  .mode .icon { margin-right: 7px; }
  .mode .caret { margin-left: 3px; border-width: 6px 6px 0; }
  .text, .mode { flex: none; }

  .viewport { width: 1017px; height: 770px; flex: none; }
  .scale { font: 19.5px 'Open Sans', sans-serif; fill: #000; }
  .bottom { flex: 1; margin-top: 8px; display: grid; grid-template-columns: 940px 69px; column-gap: 8px; min-height: 0; }
  .graph { background: #fff; }
  .plot { display: block; width: 940px; height: 199px; }
  .ticks { font: 16.5px 'Open Sans', sans-serif; fill: #333; text-anchor: end; }
  .end { font-weight: 600; }
  .table { background: #a0a0a0; overflow: hidden; }
  .cells { display: grid; grid-template-columns: 30px 39px; grid-auto-rows: 36px; }
  .cell {
    box-sizing: border-box;
    display: flex;
    align-items: center;
    padding: 0 0 2px 4px;
    background: #f0f0f0;
    border: 2px solid #fff;
    border-width: 1px 2px 2px 2px;
    border-right-color: #777;
    border-bottom-color: #777;
  }
  .annotations { position: absolute; left: 0; top: -2px; width: 1453px; height: 1079px; pointer-events: none; }
</style>
